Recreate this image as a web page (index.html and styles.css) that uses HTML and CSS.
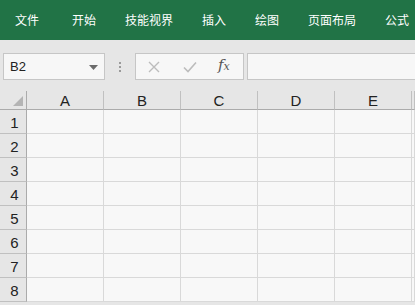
FILE: index.html
```html
<!DOCTYPE html>
<html lang="zh-CN">
<head>
    <meta charset="UTF-8">
    <title>工作簿</title>
    <link rel="stylesheet" href="styles.css">
</head>
<body>
    <div class="ribbon">
        <span class="tab first">文件</span>
        <span class="tab">开始</span>
        <span class="tab">技能视界</span>
        <span class="tab">插入</span>
        <span class="tab">绘图</span>
        <span class="tab">页面布局</span>
        <span class="tab">公式</span>
    </div>
    <div class="formula-bar">
        <div class="name-box">
            <span>B2</span>
            <svg class="caret" width="9" height="5" viewBox="0 0 9 5"><path d="M0 0h9L4.5 5z" fill="#6b6b6b"/></svg>
        </div>
        <div class="grip"><i></i><i></i><i></i></div>
        <div class="fx-buttons">
            <svg class="btn" width="12" height="12" viewBox="0 0 12 12"><path d="M1 1l10 10M11 1L1 11" stroke="#bcbcbc" stroke-width="1.4" fill="none"/></svg>
            <svg class="btn" width="14" height="12" viewBox="0 0 14 12"><path d="M1 6.5l4 4L13 1.5" stroke="#bcbcbc" stroke-width="1.6" fill="none"/></svg>
            <span class="fx">f<span class="x">x</span></span>
        </div>
        <div class="formula-input"></div>
    </div>
    <div class="sheet">
        <div class="corner"><div class="select-all"></div></div>
        <div class="col-head">A</div>
        <div class="col-head">B</div>
        <div class="col-head">C</div>
        <div class="col-head">D</div>
        <div class="col-head">E</div>
        <div class="col-head"></div>
    </div>
    <script>
        const sheet = document.querySelector('.sheet');
        for (let r = 1; r <= 8; r++) {
            const head = document.createElement('div');
            head.className = 'row-head';
            head.textContent = r;
            sheet.appendChild(head);
            for (let c = 0; c < 6; c++) {
                const cell = document.createElement('div');
                cell.className = 'cell';
                sheet.appendChild(cell);
            }
        }
    </script>
</body>
</html>
```

FILE: styles.css
```css
body {
    margin: 0;
    width: 415px;
    height: 305px;
    overflow: hidden;
    background-color: #e6e6e6;
    font-family: 'Liberation Sans', 'Noto Sans CJK SC', sans-serif;
}
.ribbon {
    height: 40px;
    background-color: #217346;
    display: flex;
    align-items: center;
    gap: 29px;
    padding-left: 15px;
    padding-bottom: 1px;
    box-sizing: border-box;
    white-space: nowrap;
    overflow: hidden;
}
.tab {
    color: #fff;
    font-family: 'Noto Sans CJK SC', sans-serif;
    font-size: 12px;
    line-height: 14px;
}
.tab.first {
    margin-right: 4px;
}
.formula-bar {
    display: flex;
    align-items: center;
    height: 27px;
    margin-top: 13px;
    padding-left: 3px;
}
.name-box {
    width: 102px;
    height: 27px;
    box-sizing: border-box;
    border: 1px solid #c6c6c6;
    background-color: #f7f7f7;
    display: flex;
    align-items: center;
    justify-content: space-between;
    padding: 0 6px 0 6px;
    font-size: 13px;
    color: #222;
}
.caret {
    margin-top: 1px;
}
.grip {
    width: 30px;
    display: flex;
    flex-direction: column;
    align-items: center;
    gap: 2px;
}
.grip i {
    width: 2px;
    height: 2px;
    background-color: #9a9a9a;
}
.fx-buttons {
    width: 109px;
    height: 27px;
    box-sizing: border-box;
    border: 1px solid #c6c6c6;
    background-color: #f7f7f7;
    display: flex;
    align-items: center;
    padding-left: 12px;
}
.btn:nth-child(2) {
    margin-left: 23px;
}
.fx {
    margin-left: 21px;
    font-family: 'DejaVu Serif', serif;
    font-style: italic;
    font-size: 15px;
    line-height: 15px;
    color: #555;
    margin-top: -2px;
}
.fx .x {
    font-size: 11px;
}
.formula-input {
    flex: 1;
    height: 27px;
    margin-left: 3px;
    box-sizing: border-box;
    border: 1px solid #c6c6c6;
    border-right: none;
    background-color: #f7f7f7;
}
.sheet {
    display: grid;
    grid-template-columns: 27px repeat(5, 77px) 1fr;
    grid-template-rows: 19px;
    grid-auto-rows: 24px;
    margin-top: 11px;
}
.corner,
.col-head,
.row-head {
    box-sizing: border-box;
    background-color: #e6e6e6;
}
.corner {
    border-right: 1px solid #ababab;
    border-bottom: 1px solid #ababab;
    position: relative;
}
.select-all {
    position: absolute;
    right: 3px;
    bottom: 3px;
    width: 0;
    height: 0;
    border-left: 10px solid transparent;
    border-bottom: 10px solid #b4b4b4;
}
.col-head {
    border-bottom: 1px solid #ababab;
    border-right: 1px solid #c0c0c0;
    text-align: center;
    font-size: 15px;
    line-height: 19px;
    color: #222;
}
.row-head {
    border-right: 1px solid #ababab;
    border-bottom: 1px solid #c0c0c0;
    text-align: center;
    padding-left: 3px;
    font-size: 15px;
    line-height: 26px;
    color: #222;
}
.cell {
    box-sizing: border-box;
    background-color: #f8f8f8;
    border-right: 1px solid #d9d9d9;
    border-bottom: 1px solid #d9d9d9;
}
```
